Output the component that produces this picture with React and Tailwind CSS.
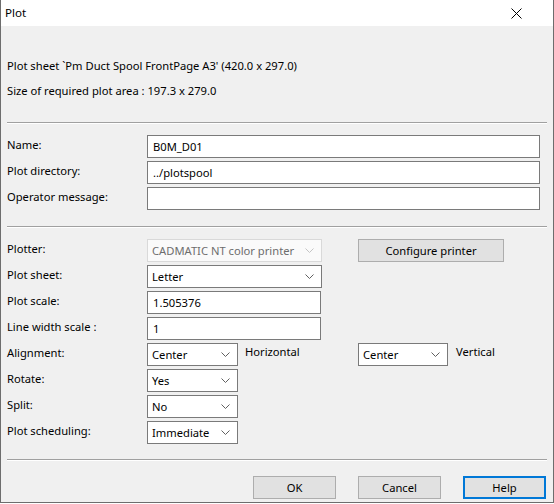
import React from 'react';

const Chevron = ({ disabled }) => (
    <svg width="9" height="6" viewBox="0 0 9 6" className="shrink-0">
        <path d="M0.5 0.5 L4.5 4.5 L8.5 0.5" fill="none" stroke={disabled ? '#c4c4c4' : '#606060'} strokeWidth="1" />
    </svg>
);

const Select = ({ value, width, disabled }) => (
    <div
        className={`h-[23px] ${width} flex items-center justify-between pl-[4px] pr-[7px] border ${
            disabled ? 'border-[#d9d9d9] bg-[#fafafa] text-[#6d6d6d]' : 'border-[#7a7a7a] bg-white text-black'
        }`}
    >
        <span>{value}</span>
        <Chevron disabled={disabled} />
    </div>
);

const TextBox = ({ value, width }) => (
    <div className={`h-[23px] ${width} flex items-center pl-[5px] border border-[#7a7a7a] bg-white`}>
        {value}
    </div>
);

const Row = ({ label, children }) => (
    <div className="flex items-start h-[26px]">
        <div className="w-[140px] pt-[2px]">{label}</div>
        {children}
    </div>
);

const Separator = () => (
    <div className="mx-[6px] border-t border-[#a0a0a0] border-b border-b-white" />
);

const Button = ({ children, focused }) => (
    <div
        className={`w-[83px] h-[23px] flex items-center justify-center bg-[#e1e1e1] ${
            focused ? 'border-2 border-[#0078d7]' : 'border border-[#adadad]'
        }`}
    >
        {children}
    </div>
);

export default function App() {
    return (
        <div className="w-[554px] h-[503px] bg-[#f0f0f0] border-l border-r border-b border-[#6d6d6d] text-[11.2px] text-black font-['Noto_Sans',sans-serif] leading-[16px]">
            {/* title bar */}
            <div className="h-[26px] bg-white flex items-center justify-between pl-[4px] pr-[31px] text-[11.6px]">
                <span>Plot</span>
                <svg width="11" height="11" viewBox="0 0 11 11">
                    <path d="M0.5 0.5 L10.5 10.5 M10.5 0.5 L0.5 10.5" stroke="#000" strokeWidth="1" />
                </svg>
            </div>

            <div className="pl-[6px] pr-[6px]">
                <div className="pt-[32px]">Plot sheet `Pm Duct Spool FrontPage A3' (420.0 x 297.0)</div>
                <div className="mt-[9px]">Size of required plot area : 197.3 x 279.0</div>
            </div>

            <div className="mt-[23px]">
                <Separator />
            </div>

            <div className="pl-[6px] mt-[11px]">
                <Row label="Name:">
                    <TextBox value="B0M_D01" width="w-[393px]" />
                </Row>
                <Row label="Plot directory:">
                    <TextBox value="../plotspool" width="w-[393px]" />
                </Row>
                <Row label="Operator message:">
                    <TextBox value="" width="w-[393px]" />
                </Row>
            </div>

            <div className="mt-[13px]">
                <Separator />
            </div>

            <div className="pl-[6px] mt-[11px]">
                <Row label="Plotter:">
                    <Select value="CADMATIC NT color printer" width="w-[175px]" disabled />
                    <div className="ml-[36px] w-[146px] h-[23px] flex items-center justify-center bg-[#e1e1e1] border border-[#adadad]">
                        Configure printer
                    </div>
                </Row>
                <Row label="Plot sheet:">
                    <Select value="Letter" width="w-[175px]" />
                </Row>
                <Row label="Plot scale:">
                    <TextBox value="1.505376" width="w-[174px]" />
                </Row>
                <Row label="Line width scale :">
                    <TextBox value="1" width="w-[174px]" />
                </Row>
                <Row label="Alignment:">
                    <Select value="Center" width="w-[91px]" />
                    <div className="w-[120px] pl-[7px] pt-[1px]">Horizontal</div>
                    <Select value="Center" width="w-[90px]" />
                    <div className="pl-[8px] pt-[1px]">Vertical</div>
                </Row>
                <Row label="Rotate:">
                    <Select value="Yes" width="w-[91px]" />
                </Row>
                <Row label="Split:">
                    <Select value="No" width="w-[91px]" />
                </Row>
                <Row label="Plot scheduling:">
                    <Select value="Immediate" width="w-[91px]" />
                </Row>
            </div>

            <div className="mt-[12px]">
                <Separator />
            </div>

            <div className="mt-[15px] flex justify-end gap-[22px] pr-[7px]">
                <Button>OK</Button>
                <Button>Cancel</Button>
                <Button focused>Help</Button>
            </div>
        </div>
    );
}
